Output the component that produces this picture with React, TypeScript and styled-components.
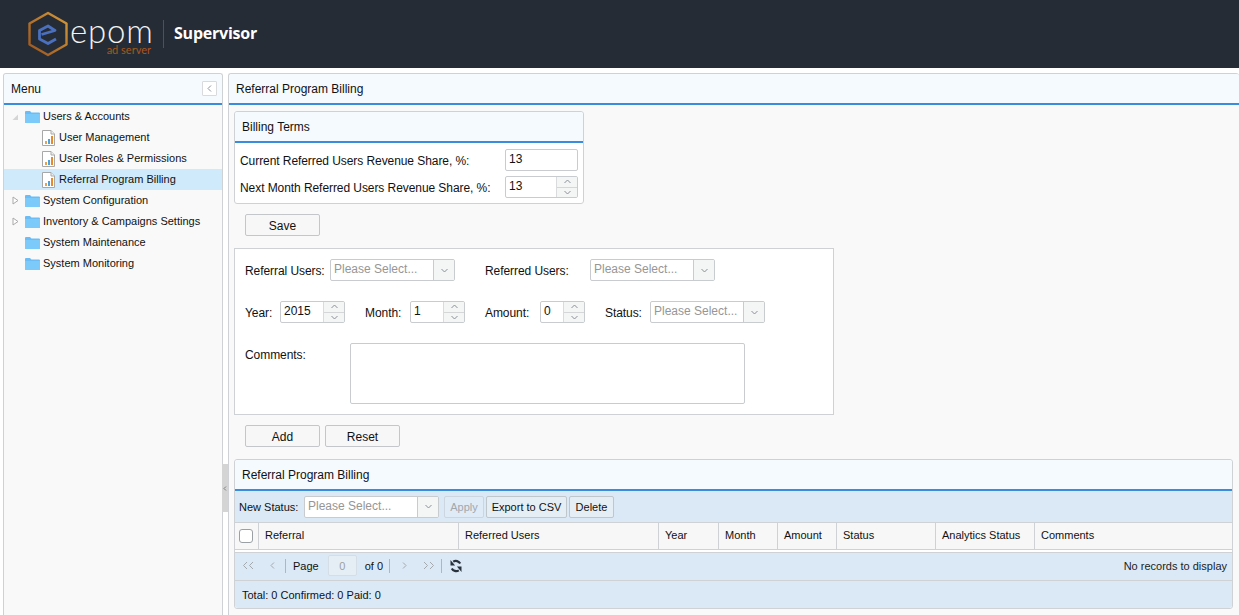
import React from "react";
import styled, { createGlobalStyle } from "styled-components";

const Global = createGlobalStyle`
  html, body { margin: 0; padding: 0; height: 100%; overflow: hidden; background: #fff; }
  #root { height: 100%; }
  * { box-sizing: border-box; }
  body { font-family: "Liberation Sans", Arial, sans-serif; font-size: 12px; color: #111; }
`;

const Page = styled.div`
  height: 615px;
  display: flex;
  flex-direction: column;
  overflow: hidden;
`;
const Header = styled.header`
  height: 68px;
  flex: none;
  background: #262c35;
  display: flex;
  align-items: center;
  padding-left: 28px;
`;
const LogoMark = styled.svg`
  width: 42px;
  height: 46px;
  flex: none;
`;
const Wordmark = styled.div`
  position: relative;
  width: 81px;
  height: 46px;
  padding-top: 6px;
`;
const Epom = styled.span`
  font-family: Lato, "Liberation Sans", sans-serif;
  font-weight: 300;
  font-size: 33px;
  line-height: 26px;
  color: #f3f3f3;
  display: block;
  letter-spacing: 0.8px;
`;
const AdServer = styled.span`
  position: absolute;
  right: 0;
  top: 33px;
  font-family: Lato, "Liberation Sans", sans-serif;
  font-size: 11px;
  line-height: 11px;
  color: #a9561d;
  white-space: nowrap;
`;
const LogoDivider = styled.div`
  width: 1px;
  height: 28px;
  background: #4c525a;
  margin: 0 10px 0 12px;
`;
const Role = styled.div`
  font-family: "Open Sans", sans-serif;
  font-weight: 700;
  font-size: 16px;
  letter-spacing: -0.22px;
  color: #fff;
  margin-top: -2px;
`;
const Body = styled.div`
  flex: 1;
  min-height: 0;
  display: flex;
  padding: 5px 0 0 3px;
`;
const Panel = styled.section<{ $width?: number; $grow?: boolean }>`
  ${(p) => (p.$width ? `width: ${p.$width}px; flex: none;` : "")}
  ${(p) => (p.$grow ? "flex: 1; min-width: 0;" : "")}
  border: 1px solid #cfd2d5;
  border-bottom: 0;
  border-right-width: ${(p) => (p.$grow ? 0 : 1)}px;
  border-radius: 3px 3px 0 0;
  background: #f9f9f9;
  display: flex;
  flex-direction: column;
`;
const TitleBar = styled.div<{ $h?: number }>`
  height: ${(p) => p.$h ?? 31}px;
  flex: none;
  display: flex;
  align-items: center;
  justify-content: space-between;
  padding: 0 5px 0 7px;
  background: #f5faff;
  border-bottom: 2px solid #3a8ddd;
  font-size: 12px;
  color: #111;
  border-radius: 3px 3px 0 0;
`;
const Collapse = styled.button`
  width: 15px;
  height: 15px;
  padding: 0;
  border: 1px solid #d8dadc;
  background: #fff;
  display: flex;
  align-items: center;
  justify-content: center;
  border-radius: 1px;
`;
const Tree = styled.nav`
  padding-top: 1px;
  display: flex;
  flex-direction: column;
`;
const TreeRow = styled.div<{ $child?: boolean; $active?: boolean }>`
  height: 21px;
  display: flex;
  align-items: center;
  padding-left: ${(p) => (p.$child ? 38 : 7)}px;
  background: ${(p) => (p.$active ? "#cfeafb" : "transparent")};
  font-size: 11px;
  color: #111;
  white-space: nowrap;
`;
const TreeLabel = styled.span`
  padding-bottom: 2px;
`;
const ArrowSlot = styled.span`
  width: 14px;
  height: 12px;
  flex: none;
  display: flex;
  align-items: center;
  padding-left: 1px;
`;
const Folder = styled.svg`
  width: 15px;
  height: 13px;
  flex: none;
  margin-right: 3px;
`;
const FileIcon = styled.svg`
  width: 13px;
  height: 16px;
  flex: none;
  margin-right: 4px;
`;
const Splitter = styled.div`
  width: 5px;
  flex: none;
  position: relative;
`;
const SplitHandle = styled.div`
  position: absolute;
  left: -1px;
  top: 391px;
  width: 6px;
  height: 48px;
  background: #d4d4d4;
  display: flex;
  align-items: center;
  justify-content: center;
`;
const Content = styled.div`
  padding: 6px 5px 0 5px;
  display: flex;
  flex-direction: column;
  flex: 1;
  min-height: 0;
`;
const TermsBox = styled.div`
  width: 350px;
  height: 93px;
  border: 1px solid #cfd2d5;
  border-radius: 3px;
  background: #fff;
  display: flex;
  flex-direction: column;
`;
const TermsBody = styled.div`
  padding: 6px 5px 0 5px;
  display: flex;
  flex-direction: column;
  gap: 5px;
`;
const TermsRow = styled.div`
  display: flex;
  align-items: center;
  height: 22px;
`;
const Label = styled.label<{ $w: number }>`
  width: ${(p) => p.$w}px;
  flex: none;
  font-size: 12px;
  letter-spacing: -0.07px;
  color: #111;
  white-space: nowrap;
  padding-top: 2px;
`;
const TextBox = styled.div<{ $w: number }>`
  width: ${(p) => p.$w}px;
  height: 22px;
  flex: none;
  border: 1px solid #c9cccf;
  border-radius: 2px;
  background: #fff;
  display: flex;
  align-items: stretch;
  overflow: hidden;
`;
const BoxValue = styled.span<{ $placeholder?: boolean }>`
  flex: 1;
  min-width: 0;
  padding: 2px 0 0 3px;
  line-height: 14px;
  font-size: 12px;
  color: ${(p) => (p.$placeholder ? "#969696" : "#111")};
  white-space: nowrap;
`;
const SpinCol = styled.span`
  width: 21px;
  flex: none;
  border-left: 1px solid #d9dbdd;
  background: #f4f5f5;
  display: flex;
  flex-direction: column;
`;
const SpinPart = styled.span<{ $down?: boolean }>`
  flex: 1;
  display: flex;
  align-items: center;
  justify-content: center;
  border-top: ${(p) => (p.$down ? "1px solid #d4d6d8" : "0")};
`;
const DropBtn = styled.span`
  width: 21px;
  flex: none;
  border-left: 1px solid #c9cccf;
  background: #f4f5f5;
  display: flex;
  align-items: center;
  justify-content: center;
`;
const Button = styled.button<{ $w?: number }>`
  width: ${(p) => (p.$w ? `${p.$w}px` : "auto")};
  height: 22px;
  padding: 1px 0 0;
  flex: none;
  border: 1px solid #c4c7ca;
  border-radius: 2px;
  background: #f7f7f7;
  font: 12px "Liberation Sans", Arial, sans-serif;
  color: #111;
  white-space: nowrap;
`;
const ButtonRow = styled.div<{ $top: number }>`
  display: flex;
  gap: 5px;
  padding-left: 11px;
  margin-top: ${(p) => p.$top}px;
`;
const FormBox = styled.div`
  width: 600px;
  height: 167px;
  margin-top: 12px;
  border: 1px solid #cfd2d5;
  background: #fff;
  padding: 10px 0 0 10px;
  display: flex;
  flex-direction: column;
`;
const FormRow = styled.div<{ $top?: number; $h?: number }>`
  display: flex;
  align-items: ${(p) => (p.$h ? "flex-start" : "center")};
  height: ${(p) => p.$h ?? 22}px;
  margin-top: ${(p) => p.$top ?? 0}px;
`;
const Spacer = styled.span<{ $w: number }>`
  width: ${(p) => p.$w}px;
  flex: none;
`;
const CommentLabel = styled(Label)`
  padding-top: 5px;
`;
const TextArea = styled.div`
  width: 395px;
  height: 61px;
  border: 1px solid #c9cccf;
  border-radius: 2px;
  background: #fff;
`;
const GridPanel = styled.div`
  width: 999px;
  height: 150px;
  margin-top: 12px;
  border: 1px solid #cfd2d5;
  border-radius: 3px;
  background: #fff;
  display: flex;
  flex-direction: column;
`;
const Toolbar = styled.div`
  height: 31px;
  flex: none;
  background: #dbe9f6;
  display: flex;
  align-items: center;
  padding: 0 4px;
  gap: 2px;
  font-size: 11px;
`;
const StatusLabel = styled.span`
  margin-right: 4px;
  width: 59px;
  flex: none;
  white-space: nowrap;
`;
const SmallButton = styled(Button)<{ $disabled?: boolean }>`
  font-size: 11px;
  background: ${(p) => (p.$disabled ? "#dfebf6" : "#e6eef5")};
  border-color: ${(p) => (p.$disabled ? "#cbd6e0" : "#bfc6cc")};
  color: ${(p) => (p.$disabled ? "#a0a8ae" : "#111")};
`;
const ToolbarSelect = styled(TextBox)`
  margin-right: 3px;
`;
const HeaderRow = styled.div`
  height: 28px;
  flex: none;
  display: flex;
  background: #f7f7f7;
  border-top: 1px solid #cfd2d5;
  border-bottom: 1px solid #cfd2d5;
`;
const HeadCell = styled.div<{ $w?: number }>`
  ${(p) => (p.$w ? `width: ${p.$w}px; flex: none;` : "flex: 1;")}
  border-right: 1px solid #cfd2d5;
  padding: 0 0 2px 6px;
  display: flex;
  align-items: center;
  font-size: 11px;
  color: #111;
  white-space: nowrap;
  &:last-child { border-right: 0; }
`;
const CheckCell = styled(HeadCell)`
  padding: 0 0 0 4px;
`;
const Checkbox = styled.span`
  width: 14px;
  height: 14px;
  border: 1px solid #9aa0a5;
  border-radius: 3px;
  background: #fff;
`;
const Pager = styled.div`
  height: 29px;
  flex: none;
  margin-top: 2px;
  background: #dbe9f6;
  border-top: 1px solid #cfd2d5;
  border-bottom: 1px solid #cfd2d5;
  display: flex;
  align-items: center;
  font-size: 11px;
  padding: 0 5px 2px 7px;
`;
const PagerBtn = styled.span<{ $w: number; $left?: number }>`
  width: ${(p) => p.$w}px;
  margin-left: ${(p) => p.$left ?? 0}px;
  flex: none;
  display: flex;
  align-items: center;
  justify-content: center;
`;
const PagerSep = styled.span<{ $left: number; $right: number }>`
  width: 1px;
  height: 14px;
  background: #8fbdee;
  flex: none;
  margin: 0 ${(p) => p.$right}px 0 ${(p) => p.$left}px;
`;
const PageInput = styled.span`
  width: 29px;
  height: 21px;
  flex: none;
  border: 1px solid #d5dee6;
  border-radius: 2px;
  background: #e6eef5;
  color: #9aa0a5;
  display: flex;
  align-items: center;
  justify-content: center;
  margin: 0 8px 0 9px;
  font-size: 11px;
`;
const PagerNote = styled.span`
  margin-left: auto;
  color: #222;
`;
const Totals = styled.div`
  flex: 1;
  background: #dbe9f6;
  display: flex;
  align-items: center;
  padding-left: 7px;
  font-size: 11px;
  border-radius: 0 0 3px 3px;
`;

const Chevron = ({ dir, color = "#8d9297", size = 9 }: { dir: "u" | "d" | "l" | "r"; color?: string; size?: number }) => {
  const d = { u: "M1.5 6 4.5 3 7.5 6", d: "M1.5 3 4.5 6 7.5 3", l: "M6 1.5 3 4.5 6 7.5", r: "M3 1.5 6 4.5 3 7.5" }[dir];
  return (
    <svg width={size} height={size} viewBox="0 0 9 9" fill="none">
      <path d={d} stroke={color} strokeWidth="1" />
    </svg>
  );
};
const DoubleChevron = ({ dir }: { dir: "l" | "r" }) => (
  <svg width="13" height="9" viewBox="0 0 13 9" fill="none">
    <path
      d={dir === "l" ? "M5 1 1.5 4.5 5 8M11 1 7.5 4.5 11 8" : "M2 1 5.5 4.5 2 8M8 1 11.5 4.5 8 8"}
      stroke="#a3a9ae"
      strokeWidth="1"
    />
  </svg>
);
const FolderGlyph = () => (
  <Folder viewBox="0 0 15 13">
    <path d="M0 2a1 1 0 0 1 1-1h4l1.5 1.5H14a1 1 0 0 1 1 1V12a1 1 0 0 1-1 1H1a1 1 0 0 1-1-1Z" fill="#6cbdf5" />
    <path d="M0 4h15v8a1 1 0 0 1-1 1H1a1 1 0 0 1-1-1Z" fill="#7ccafa" />
  </Folder>
);
const FileGlyph = () => (
  <FileIcon viewBox="0 0 13 16">
    <path d="M.5.5h8.5l3.5 3.5v11.5H.5Z" fill="#fff" stroke="#a8a8a8" />
    <path d="M9 .5V4h3.5" fill="#eee" stroke="#a8a8a8" />
    <rect x="3" y="11" width="2" height="3" fill="#e8a24c" />
    <rect x="6" y="9" width="2" height="5" fill="#4aa3df" />
    <rect x="9" y="6" width="2" height="8" fill="#e8892c" />
  </FileIcon>
);
const TreeArrow = ({ open }: { open?: boolean }) => (
  <svg width="7" height="9" viewBox="0 0 7 9" fill="none">
    {open ? (
      <path d="M6 2.5V8H.5Z" fill="#d5d5d5" />
    ) : (
      <path d="M1 1 6 4.5 1 8Z" fill="#fff" stroke="#a9a9a9" />
    )}
  </svg>
);
const Refresh = () => (
  <svg width="14" height="14" viewBox="0 0 14 14" fill="none">
    <path d="M11.2 4.6A5 5 0 0 0 4.2 2.6" stroke="#27323c" strokeWidth="2.2" />
    <path d="M2.8 9.4A5 5 0 0 0 9.8 11.4" stroke="#27323c" strokeWidth="2.2" />
    <path d="M1.5 1v5.5h4.6ZM12.5 13V7.5H7.9Z" fill="#27323c" />
  </svg>
);

const Spinner = ({ value, w }: { value: string; w: number }) => (
  <TextBox $w={w}>
    <BoxValue>{value}</BoxValue>
    <SpinCol>
      <SpinPart><Chevron dir="u" /></SpinPart>
      <SpinPart $down><Chevron dir="d" /></SpinPart>
    </SpinCol>
  </TextBox>
);
const Select = ({ w }: { w: number }) => (
  <TextBox $w={w}>
    <BoxValue $placeholder>Please Select...</BoxValue>
    <DropBtn><Chevron dir="d" /></DropBtn>
  </TextBox>
);

const tree: { label: string; arrow?: "open" | "closed"; child?: boolean; active?: boolean }[] = [
  { label: "Users & Accounts", arrow: "open" },
  { label: "User Management", child: true },
  { label: "User Roles & Permissions", child: true },
  { label: "Referral Program Billing", child: true, active: true },
  { label: "System Configuration", arrow: "closed" },
  { label: "Inventory & Campaigns Settings", arrow: "closed" },
  { label: "System Maintenance" },
  { label: "System Monitoring" },
];
const columns: { label: string; w?: number }[] = [
  { label: "Referral", w: 200 },
  { label: "Referred Users", w: 200 },
  { label: "Year", w: 60 },
  { label: "Month", w: 59 },
  { label: "Amount", w: 59 },
  { label: "Status", w: 99 },
  { label: "Analytics Status", w: 99 },
  { label: "Comments" },
];

export default function App() {
  return (
    <Page>
      <Global />
      <Header>
        <LogoMark viewBox="0 0 42 46" fill="none">
          <defs>
            <linearGradient id="hex" x1="0" y1="1" x2="1" y2="0">
              <stop offset="0" stopColor="#9a5420" />
              <stop offset="1" stopColor="#d49a3a" />
            </linearGradient>
          </defs>
          <path d="M20 2 38.5 12.5V33.5L20 44 1.5 33.5V12.5Z" stroke="url(#hex)" strokeWidth="2.4" strokeLinejoin="round" />
          <path
            d="M13.5 23.5 27 19.5 20 15 11.5 19.5V28L20 32.5 28 28"
            stroke="#4a70bf"
            strokeWidth="2.8"
            strokeLinejoin="round"
          />
        </LogoMark>
        <Wordmark>
          <Epom>epom</Epom>
          <AdServer>ad server</AdServer>
        </Wordmark>
        <LogoDivider />
        <Role>Supervisor</Role>
      </Header>
      <Body>
        <Panel $width={220}>
          <TitleBar>
            <span>Menu</span>
            <Collapse aria-label="Collapse menu"><Chevron dir="l" /></Collapse>
          </TitleBar>
          <Tree>
            {tree.map((t) => (
              <TreeRow key={t.label} $child={t.child} $active={t.active}>
                {!t.child && <ArrowSlot>{t.arrow && <TreeArrow open={t.arrow === "open"} />}</ArrowSlot>}
                {t.child ? <FileGlyph /> : <FolderGlyph />}
                <TreeLabel>{t.label}</TreeLabel>
              </TreeRow>
            ))}
          </Tree>
        </Panel>
        <Splitter>
          <SplitHandle><Chevron dir="l" color="#555" size={7} /></SplitHandle>
        </Splitter>
        <Panel $grow>
          <TitleBar>Referral Program Billing</TitleBar>
          <Content>
            <TermsBox>
              <TitleBar $h={31}>Billing Terms</TitleBar>
              <TermsBody>
                <TermsRow>
                  <Label $w={265}>Current Referred Users Revenue Share, %:</Label>
                  <TextBox $w={73}><BoxValue>13</BoxValue></TextBox>
                </TermsRow>
                <TermsRow>
                  <Label $w={265}>Next Month Referred Users Revenue Share, %:</Label>
                  <Spinner value="13" w={73} />
                </TermsRow>
              </TermsBody>
            </TermsBox>
            <ButtonRow $top={10}><Button $w={75}>Save</Button></ButtonRow>
            <FormBox>
              <FormRow>
                <Label $w={85}>Referral Users:</Label>
                <Select w={125} />
                <Spacer $w={30} />
                <Label $w={105}>Referred Users:</Label>
                <Select w={125} />
              </FormRow>
              <FormRow $top={20}>
                <Label $w={35}>Year:</Label>
                <Spinner value="2015" w={65} />
                <Spacer $w={20} />
                <Label $w={45}>Month:</Label>
                <Spinner value="1" w={55} />
                <Spacer $w={20} />
                <Label $w={55}>Amount:</Label>
                <Spinner value="0" w={45} />
                <Spacer $w={20} />
                <Label $w={45}>Status:</Label>
                <Select w={115} />
              </FormRow>
              <FormRow $top={20} $h={61}>
                <CommentLabel $w={105}>Comments:</CommentLabel>
                <TextArea />
              </FormRow>
            </FormBox>
            <ButtonRow $top={10}>
              <Button $w={75}>Add</Button>
              <Button $w={75}>Reset</Button>
            </ButtonRow>
            <GridPanel>
              <TitleBar>Referral Program Billing</TitleBar>
              <Toolbar>
                <StatusLabel>New Status:</StatusLabel>
                <ToolbarSelect $w={135}>
                  <BoxValue $placeholder>Please Select...</BoxValue>
                  <DropBtn><Chevron dir="d" /></DropBtn>
                </ToolbarSelect>
                <SmallButton $w={40} $disabled>Apply</SmallButton>
                <SmallButton $w={81}>Export to CSV</SmallButton>
                <SmallButton $w={45}>Delete</SmallButton>
              </Toolbar>
              <HeaderRow>
                <CheckCell $w={24}><Checkbox /></CheckCell>
                {columns.map((c) => (
                  <HeadCell key={c.label} $w={c.w}>{c.label}</HeadCell>
                ))}
              </HeaderRow>
              <Pager>
                <PagerBtn $w={13}><DoubleChevron dir="l" /></PagerBtn>
                <PagerBtn $w={22} $left={6}><Chevron dir="l" color="#a3a9ae" /></PagerBtn>
                <PagerSep $left={2} $right={7} />
                Page
                <PageInput>0</PageInput>
                of 0
                <PagerSep $left={6} $right={0} />
                <PagerBtn $w={14} $left={7}><Chevron dir="r" color="#a3a9ae" /></PagerBtn>
                <PagerBtn $w={14} $left={10}><DoubleChevron dir="r" /></PagerBtn>
                <PagerSep $left={6} $right={7} />
                <Refresh />
                <PagerNote>No records to display</PagerNote>
              </Pager>
              <Totals>Total: 0 Confirmed: 0 Paid: 0</Totals>
            </GridPanel>
          </Content>
        </Panel>
      </Body>
    </Page>
  );
}
